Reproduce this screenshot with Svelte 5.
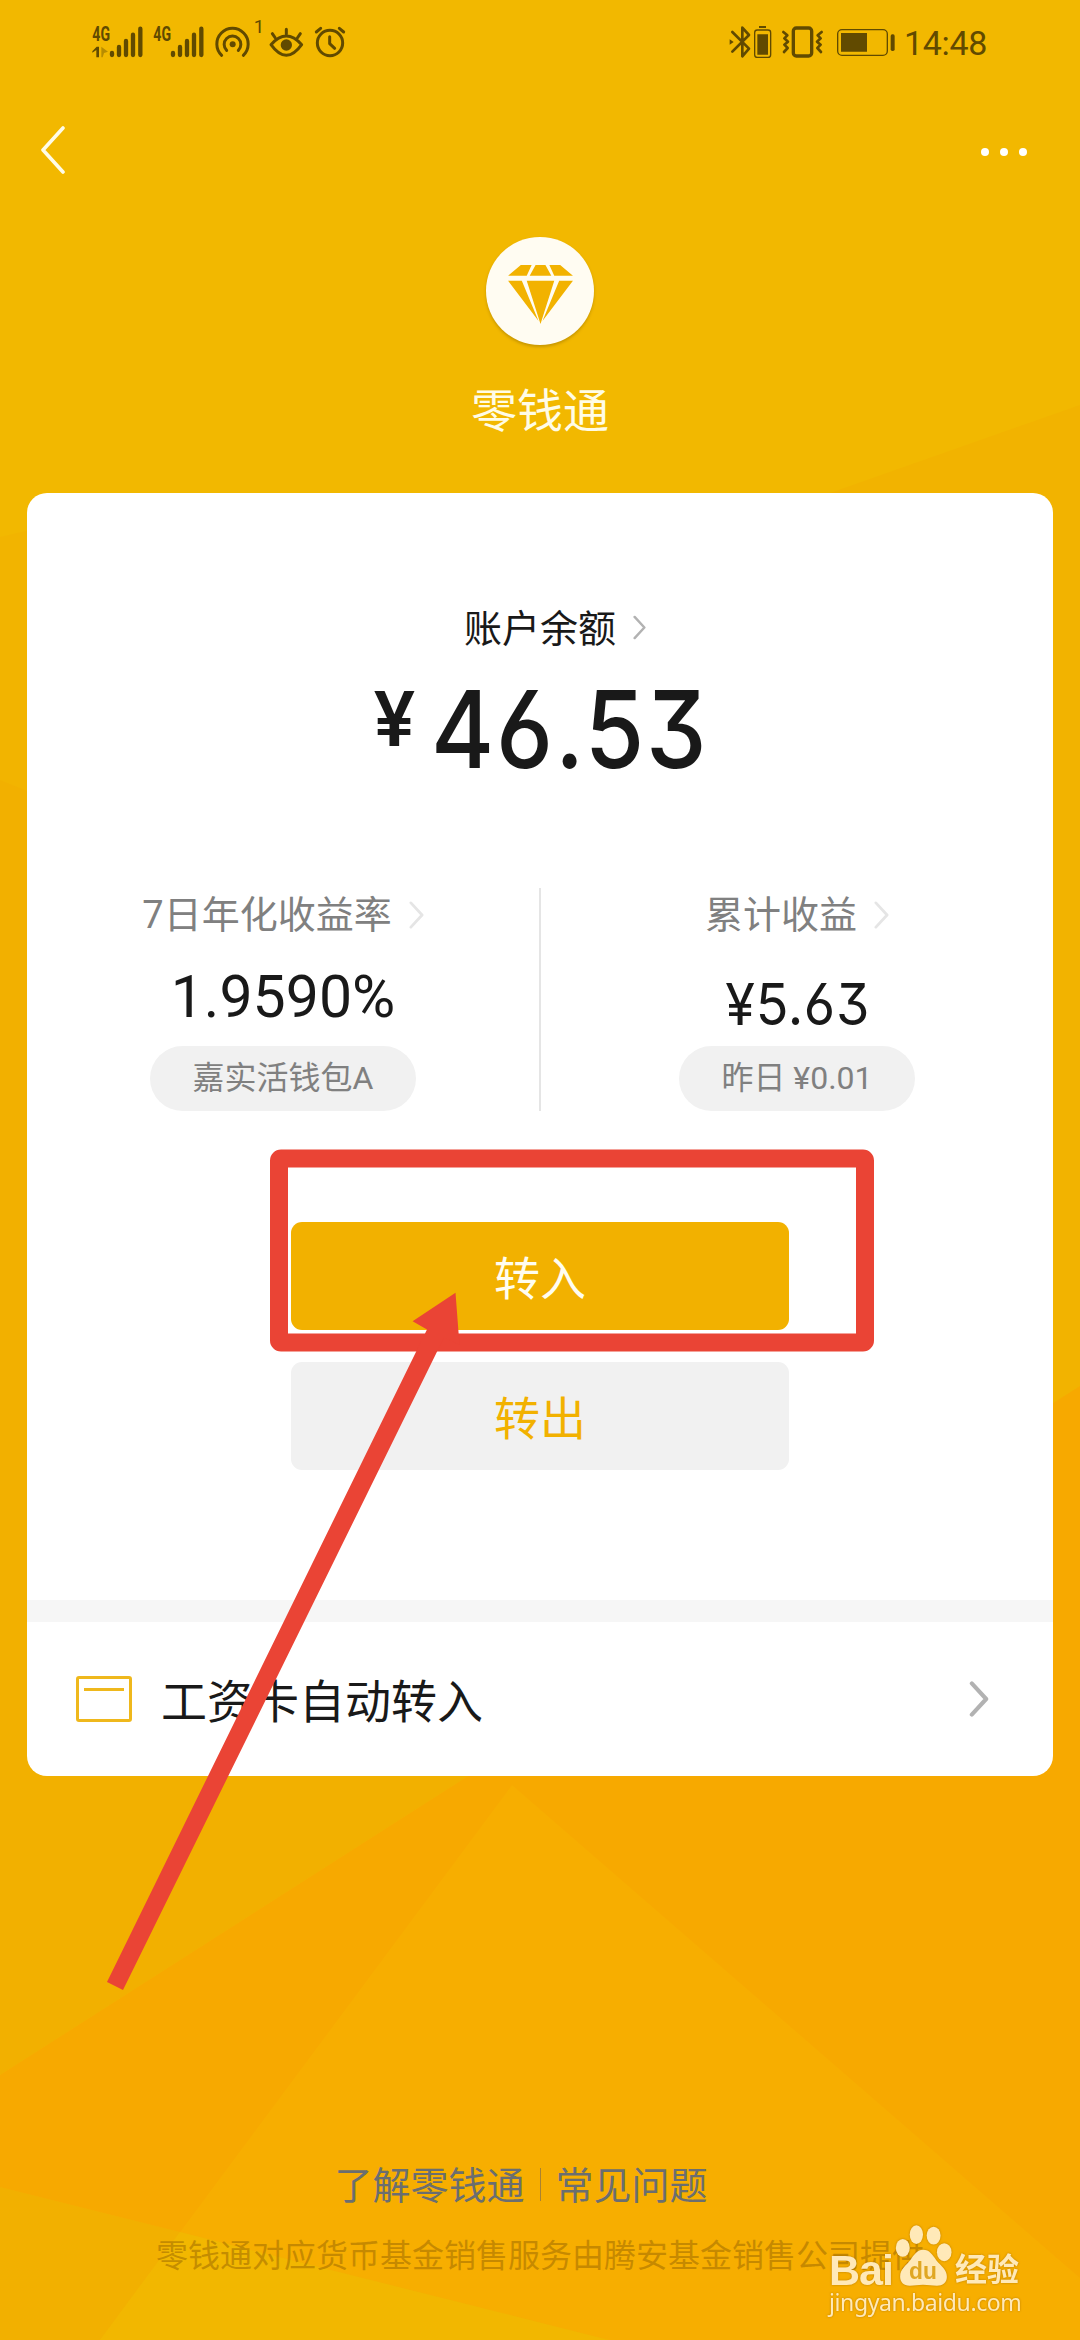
<script lang="ts">
  const balance = '46.53';
  const stats = [
    { id: 'rate', label: '7日年化收益率', value: '1.9590%', tag: '嘉实活钱包A' },
    { id: 'income', label: '累计收益', value: '¥5.63', tag: '昨日 ¥0.01' },
  ];
  const links = ['了解零钱通', '常见问题'];
</script>

{#snippet chevron(cls: string)}
  <svg class="chevron {cls}" viewBox="0 0 16 30"><path d="M2 2l12 13L2 28" /></svg>
{/snippet}

<div class="page">
  <svg class="backdrop" viewBox="0 0 1080 2340" aria-hidden="true">
    <rect width="1080" height="2340" fill="#f2b800" />
    <path d="M0 537L30 530V1000L0 780z" fill="#f2b400" />
    <path d="M0 780L540 1000V1730L468 1776L0 2075z" fill="#f2b000" />
    <path d="M1080 405L830 493L540 700V1500H1080z" fill="#f2b300" />
    <path d="M1080 1386L540 1730L468 1776L0 2075V2340H1080z" fill="#f7a900" />
    <path d="M512 1785L100 2340H1080V2278z" fill="#f7ae00" />
    <path d="M0 2187L260 2252L609 2340H0z" fill="#f2b000" />
    <path d="M180 2232L609 2340H100z" fill="#f2b700" />
  </svg>

  <header class="status">
    <svg class="status-left" viewBox="0 0 840 180">
      <g class="solid">
        <text x="37" y="92" font-size="58" textLength="53" lengthAdjust="spacingAndGlyphs">4G</text>
        <text x="220" y="92" font-size="58" textLength="53" lengthAdjust="spacingAndGlyphs">4G</text>
        <path d="M37 124l13-14h7v32h-8v-22l-12 8z" />
        <path d="M64 110l20 15-12 4-4 13h-4z" opacity=".4" />
      </g>
      <g class="line" stroke-width="13">
        <path d="M96 129v6M117 111v24M138 93v42M159 74v61M181 56v79" />
        <path d="M279 129v6M300 111v24M321 93v42M342 74v61M364 56v79" />
      </g>
      <g class="line" stroke-width="9">
        <path d="M425 136a47 47 0 1 1 65 0" />
        <path d="M440 121a25 25 0 1 1 35 0" />
        <path d="M573 104q46-52 92 0-46 64-92 0z" />
        <path d="M619 58v14M577 71l9 13M661 71l-9 13" />
        <circle cx="750" cy="99" r="38" />
        <path d="M749 80v21l15 14M709 66l13-11M791 66l-13-11" />
      </g>
      <circle class="solid" cx="458" cy="103" r="9" />
      <circle class="solid" cx="619" cy="105" r="17" />
      <text class="hotspot" x="521" y="68" font-size="56">1</text>
    </svg>
    <svg class="status-right" viewBox="0 0 540 180">
      <g class="line" stroke-width="8">
        <path d="M37 66l50 50-20 23V53l20 22-50 50" />
        <path d="M190 66l12 10-9 9 11 10-11 9 10 10-11 12M305 66l-12 10 9 9-11 10 11 9-10 10 11 12" />
      </g>
      <path class="solid" d="M29 88l12 8-12 8zM117 48h21v6h-21zM112 73h32v61h-32zM363 69h78v56h-78z" />
      <rect class="line" x="104" y="60" width="48" height="82" rx="8" stroke-width="4" />
      <rect class="line" x="220" y="54" width="55" height="84" rx="9" stroke-width="10" />
      <rect class="line" x="353" y="59" width="149" height="77" rx="13" stroke-width="4" />
      <rect class="solid" x="512" y="73" width="12" height="50" rx="5" />
    </svg>
    <span class="clock">14:48</span>
  </header>

  <nav class="navbar">
    <button class="back" aria-label="返回">
      <svg viewBox="0 0 26 48"><path d="M23 2L3 24l20 22" /></svg>
    </button>
    <button class="more" aria-label="更多"><i></i><i></i><i></i></button>
  </nav>

  <section class="brand">
    <div class="logo">
      <svg viewBox="0 0 66 60">
        <path d="M13 0h11l-5 11H0zM28 0h10l6 11H22zM42 0h11l13 11H47zM0 16h14l17 41zM19 16h28l-14 44zM52 16h14L35 57z" />
      </svg>
    </div>
    <h1>零钱通</h1>
  </section>

  <main class="card">
    <section class="balance">
      <div class="balance-label">账户余额 {@render chevron('mid')}</div>
      <div class="amount"><span class="yen">¥</span><span class="digits">{balance}</span></div>
    </section>

    <section class="stats">
      {#each stats as stat (stat.id)}
        <div class="stat {stat.id}">
          <div class="stat-label">{stat.label} {@render chevron('light')}</div>
          <div class="stat-value">{stat.value}</div>
          <div class="tag">{stat.tag}</div>
        </div>
      {/each}
    </section>

    <section class="actions">
      <button class="btn primary">转入</button>
      <button class="btn">转出</button>
    </section>

    <section class="row">
      <svg class="salary" viewBox="0 0 56 46">
        <rect x="1.5" y="1.5" width="53" height="43" rx="1.5" />
        <path d="M8 13.5h40" />
      </svg>
      <span>工资卡自动转入</span>
      {@render chevron('big')}
    </section>
  </main>

  <footer>
    <div class="links">
      {#each links as link}<span>{link}</span>{/each}
    </div>
    <p>零钱通对应货币基金销售服务由腾安基金销售公司提供</p>
  </footer>

  <!-- annotation over the transfer-in button -->
  <svg class="marker" viewBox="0 0 1080 2340" aria-hidden="true">
    <rect x="279" y="1158.5" width="586" height="184" rx="2" />
    <path d="M455.5 1292.7L412.6 1321.3L427 1329.5L107 1982L123 1990L444 1337.5L459.5 1345z" />
  </svg>

  <div class="watermark">
    <div class="wm-top">
      <span class="bai">Bai</span>
      <svg class="paw" viewBox="0 0 171 184">
        <ellipse cx="23" cy="69" rx="21" ry="27" />
        <ellipse cx="64" cy="29" rx="20" ry="28" />
        <ellipse cx="116" cy="32" rx="21" ry="27" />
        <ellipse cx="148" cy="82" rx="22" ry="27" />
        <path d="M84 75c20 0 28 15 40 31 15 18 32 28 32 50 0 19-13 27-30 27-15 0-25-3-42-3s-25 3-40 3c-19 0-29-12-29-28 0-22 18-33 32-51 11-15 20-29 37-29z" />
        <text x="42" y="164" font-size="72" textLength="84" lengthAdjust="spacingAndGlyphs">du</text>
      </svg>
      <span class="jy">经验</span>
    </div>
    <div class="wm-url">jingyan.baidu.com</div>
  </div>
</div>

<style>
  :global(body) { margin: 0; }
  .page {
    position: relative; width: 1080px; height: 2340px; overflow: hidden;
    display: flex; flex-direction: column;
    font-family: Roboto, "Noto Sans CJK SC", sans-serif;
    color: #191919;
  }
  .backdrop, .marker { position: absolute; inset: 0; width: 1080px; height: 2340px; }
  .marker { pointer-events: none; }
  .marker rect { fill: none; stroke: #ea4435; stroke-width: 18; stroke-linejoin: round; }
  .marker path { fill: #ea4435; }
  .status, .navbar, .brand, .card, footer { position: relative; }
  button { border: none; background: none; padding: 0; font: inherit; }
  svg { display: block; }

  .status { display: flex; height: 70px; padding: 10px 0 0 80px; box-sizing: border-box; color: #614a00; }
  .status-left { width: 280px; height: 60px; margin-right: 360px; }
  .status-right { width: 180px; height: 60px; }
  .solid { fill: #614a00; }
  .line { fill: none; stroke: #614a00; stroke-linecap: round; stroke-linejoin: round; }
  .status-left text { font-weight: 700; }
  .status-left .hotspot { font-weight: 400; fill: #614a00; }
  .clock { font-size: 34px; line-height: 67px; margin-left: 4px; letter-spacing: -0.3px; }

  .navbar { display: flex; justify-content: space-between; align-items: center; height: 160px; padding: 0 53px 0 40px; }
  .back svg { width: 26px; height: 48px; fill: none; stroke: #fffce8; stroke-width: 3.6; stroke-linecap: round; stroke-linejoin: round; }
  .more { display: flex; gap: 11px; padding-top: 3px; }
  .more i { width: 8px; height: 8px; border-radius: 50%; background: #fff; }

  .brand { display: flex; flex-direction: column; align-items: center; height: 263px; }
  .logo {
    display: flex; align-items: center; justify-content: center;
    width: 108px; height: 108px; margin-top: 7px; border-radius: 50%;
    background: #fffcf2; box-shadow: 0 2px 3px rgba(120, 90, 0, 0.35);
  }
  .logo svg { width: 65px; height: 59px; margin-top: 6px; fill: #f2b200; }
  h1 { margin: 33px 0 0; font-size: 46px; line-height: 66px; font-weight: 400; color: #fffce6; }

  .card { width: 1026px; height: 1283px; margin: 0 27px; background: #fff; border-radius: 20px; overflow: hidden; }
  .chevron { fill: none; stroke-linecap: round; stroke-linejoin: round; }
  .mid { width: 13px; height: 25px; margin-bottom: 3px; stroke: #b2b2b2; stroke-width: 3; }
  .light { width: 15px; height: 28px; margin-bottom: 2px; stroke: #e5e5e5; stroke-width: 3; }
  .big { width: 20px; height: 36px; stroke: #b2b2b2; stroke-width: 3.4; margin-left: auto; }

  .balance { height: 395px; padding-top: 106px; box-sizing: border-box; }
  .balance-label { display: flex; align-items: center; justify-content: center; gap: 17px; font-size: 38px; line-height: 60px; padding-left: 30px; }
  .amount { display: flex; justify-content: center; font-family: Inter, Roboto, sans-serif; font-weight: 500; font-feature-settings: "cv03", "cv09"; }
  .yen { font-size: 75px; font-weight: 600; line-height: 120px; margin-right: 16px; }
  .digits { font-size: 107px; line-height: 140px; letter-spacing: 2px; margin-right: -33px; transform: scaleX(0.9); transform-origin: left; }

  .stats { display: flex; height: 223px; }
  .stat { flex: none; width: 514px; display: flex; flex-direction: column; align-items: center; box-sizing: border-box; }
  .rate { border-right: 2px solid #e5e5e5; }
  .income { width: 512px; }
  .stat-label { display: flex; align-items: center; gap: 17px; font-size: 38px; line-height: 55px; color: #808080; }
  .stat-value { font-size: 59px; line-height: 84px; margin-top: 12px; height: 91px; }
  .income .stat-value { font-family: Inter, Roboto, sans-serif; font-size: 58px; font-feature-settings: "cv03", "cv09"; letter-spacing: 0.7px; padding: 7px 0 0 2px; height: 84px; transform: scaleX(0.93); }
  .tag { padding: 0 43px; border-radius: 33px; background: #f1f1f1; color: #808080; font-size: 32px; line-height: 65px; }
  .income .tag { padding: 0 42px; }

  .actions { display: flex; flex-direction: column; gap: 32px; height: 489px; box-sizing: border-box; padding: 111px 264px 0; }
  .btn { height: 108px; width: 498px; padding-bottom: 3px; border-radius: 11px; background: #f1f1f1; color: #f2b100; font-size: 46px; }
  .primary { background: #f2b100; color: #fffdf0; }

  .row { display: flex; align-items: center; height: 154px; padding: 0 64px 0 49px; border-top: 22px solid #f6f6f6; font-size: 46px; }
  .row span { padding-bottom: 3px; }
  .salary { width: 56px; height: 46px; margin-right: 29px; fill: none; stroke: #efb81c; stroke-width: 3; }

  footer { display: flex; flex-direction: column; align-items: center; padding-top: 380px; }
  .links { display: flex; align-items: center; font-size: 38px; line-height: 61px; color: #6b6e70; padding-right: 38px; }
  .links span + span { position: relative; margin-left: 31px; }
  .links span + span::before { content: ""; position: absolute; left: -16px; top: 12px; width: 1px; height: 33px; background: #a98232; }
  footer p { margin: 14px 0 0; font-size: 32px; line-height: 50px; color: rgba(150, 100, 0, 0.5); white-space: nowrap; }

  .watermark { position: absolute; left: 829px; top: 2225px; color: #ffe9b8; filter: drop-shadow(0 0 1px rgba(150, 95, 0, 0.6)); }
  .wm-top { display: flex; align-items: flex-end; height: 61px; }
  .bai { font: 700 43px/44px "Liberation Sans", sans-serif; letter-spacing: -1px; width: 66px; margin-bottom: -6px; }
  .paw { width: 57px; height: 61px; fill: #ffe9b8; }
  .paw text { fill: #e0a722; font: 700 72px "Liberation Sans", sans-serif; }
  .jy { font: 700 32px/34px "Noto Sans CJK SC", sans-serif; margin: 0 0 2px 3px; }
  .wm-url { font: 23px/32px "Noto Sans", sans-serif; letter-spacing: -0.4px; }
</style>
